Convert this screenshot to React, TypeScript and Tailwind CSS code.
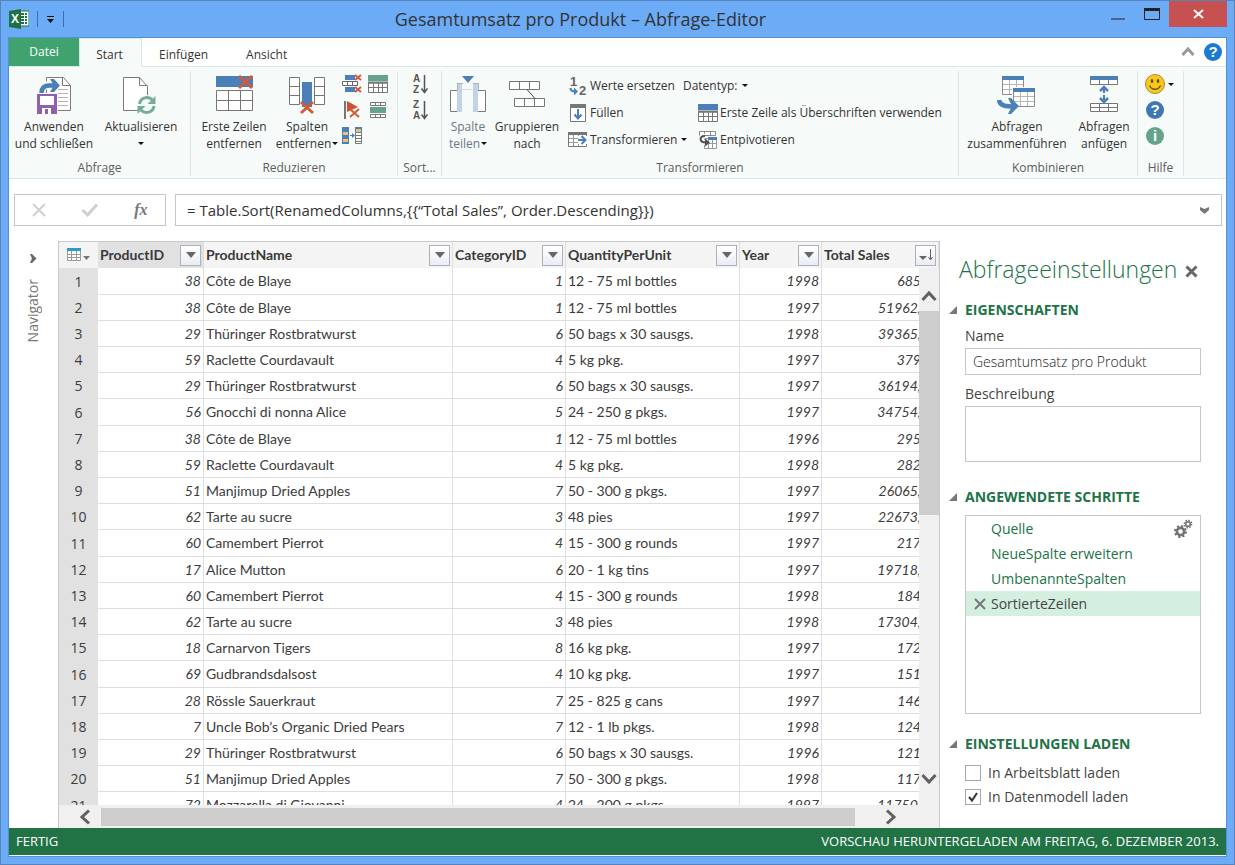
import { useState, type ReactNode } from 'react';
import clsx from 'clsx';

interface Row {
  id: number;
  name: string;
  category: number;
  quantity: string;
  year: number;
  total: string;
}

const ROWS: Row[] = [
  { id: 38, name: 'Côte de Blaye', category: 1, quantity: '12 - 75 ml bottles', year: 1998, total: '685' },
  { id: 38, name: 'Côte de Blaye', category: 1, quantity: '12 - 75 ml bottles', year: 1997, total: '51962,' },
  { id: 29, name: 'Thüringer Rostbratwurst', category: 6, quantity: '50 bags x 30 sausgs.', year: 1998, total: '39365,' },
  { id: 59, name: 'Raclette Courdavault', category: 4, quantity: '5 kg pkg.', year: 1997, total: '379' },
  { id: 29, name: 'Thüringer Rostbratwurst', category: 6, quantity: '50 bags x 30 sausgs.', year: 1997, total: '36194,' },
  { id: 56, name: 'Gnocchi di nonna Alice', category: 5, quantity: '24 - 250 g pkgs.', year: 1997, total: '34754,' },
  { id: 38, name: 'Côte de Blaye', category: 1, quantity: '12 - 75 ml bottles', year: 1996, total: '295' },
  { id: 59, name: 'Raclette Courdavault', category: 4, quantity: '5 kg pkg.', year: 1998, total: '282' },
  { id: 51, name: 'Manjimup Dried Apples', category: 7, quantity: '50 - 300 g pkgs.', year: 1997, total: '26065,' },
  { id: 62, name: 'Tarte au sucre', category: 3, quantity: '48 pies', year: 1997, total: '22673,' },
  { id: 60, name: 'Camembert Pierrot', category: 4, quantity: '15 - 300 g rounds', year: 1997, total: '217' },
  { id: 17, name: 'Alice Mutton', category: 6, quantity: '20 - 1 kg tins', year: 1997, total: '19718,' },
  { id: 60, name: 'Camembert Pierrot', category: 4, quantity: '15 - 300 g rounds', year: 1998, total: '184' },
  { id: 62, name: 'Tarte au sucre', category: 3, quantity: '48 pies', year: 1998, total: '17304,' },
  { id: 18, name: 'Carnarvon Tigers', category: 8, quantity: '16 kg pkg.', year: 1997, total: '172' },
  { id: 69, name: 'Gudbrandsdalsost', category: 4, quantity: '10 kg pkg.', year: 1997, total: '151' },
  { id: 28, name: 'Rössle Sauerkraut', category: 7, quantity: '25 - 825 g cans', year: 1997, total: '146' },
  { id: 7, name: 'Uncle Bob’s Organic Dried Pears', category: 7, quantity: '12 - 1 lb pkgs.', year: 1998, total: '124' },
  { id: 29, name: 'Thüringer Rostbratwurst', category: 6, quantity: '50 bags x 30 sausgs.', year: 1996, total: '121' },
  { id: 51, name: 'Manjimup Dried Apples', category: 7, quantity: '50 - 300 g pkgs.', year: 1998, total: '117' },
  { id: 72, name: 'Mozzarella di Giovanni', category: 4, quantity: '24 - 200 g pkgs.', year: 1997, total: '11750,' },
];

const COLUMNS = [
  { label: 'ProductID', width: 'w-[106px]' },
  { label: 'ProductName', width: '' },
  { label: 'CategoryID', width: 'w-[113px]' },
  { label: 'QuantityPerUnit', width: 'w-[174px]' },
  { label: 'Year', width: 'w-[82px]' },
  { label: 'Total Sales', width: 'w-[117px]' },
];

const STEPS = ['Quelle', 'NeueSpalte erweitern', 'UmbenannteSpalten', 'SortierteZeilen'];

function Caret() {
  return (
    <svg width="6" height="3" viewBox="0 0 6 3" className="shrink-0">
      <path d="M0 0h6L3 3z" fill="#111" />
    </svg>
  );
}

/* ---- large ribbon icons ---- */

function ApplyIcon() {
  return (
    <svg width="40" height="40" viewBox="0 0 40 40" fill="none">
      <path d="M12.5 2.5h17l7 8v25h-24z" fill="#fff" stroke="#7a7a7a" />
      <path d="M28.5 2.5v8h8" stroke="#7a7a7a" />
      <path d="M24 14.5h10M24 18.5h10M24 22.5h10M24 26.5h10M24 30.5h10" stroke="#b5b5b5" />
      <path d="M7 18c0-5 3-8 8-8h4" stroke="#f6faf9" strokeWidth="8" />
      <path d="M7.5 18c0-5 3-7.5 8-7.5h5" stroke="#4a7fb8" strokeWidth="4.5" />
      <path d="M16 4h4l6 6.5-6 6.5h-4l4-6.5z" fill="#4a7fb8" />
      <path d="M2 18h22v22H2z" fill="#f6faf9" />
      <path d="M3 19h20v20H3z" fill="#8e60b0" />
      <path d="M6 21h14v9H6z" fill="#fff" />
      <path d="M8 33h9v6H8z" fill="#fff" />
      <path d="M11 34h3v5h-3z" fill="#8e60b0" />
    </svg>
  );
}

function RefreshIcon() {
  return (
    <svg width="40" height="40" viewBox="0 0 40 40" fill="none">
      <path d="M2.5 2.5h16l8 9v24h-24z" fill="#fff" stroke="#7a7a7a" />
      <path d="M18.5 2.5v8h8" stroke="#7a7a7a" />
      <circle cx="25.5" cy="30" r="10" fill="#f6faf9" />
      <path d="M18.5 29a7.500 7.500 0 0 1 13-4M33 31a7.500 7.500 0 0 1-13 4" stroke="#76ac97" strokeWidth="3" />
      <path d="M34.5 21v8h-8zM16.5 39v-8h8z" fill="#76ac97" />
    </svg>
  );
}

function Cross({ x, y, s }: { x: number; y: number; s: number }) {
  return (
    <path
      d={`M${x} ${y}l${s} ${s - 1}M${x + s} ${y}l${-s} ${s - 1}`}
      stroke="#cf5b3b"
      strokeWidth={s > 9 ? 3 : 2}
      fill="none"
    />
  );
}

function RemoveRowsIcon() {
  return (
    <svg width="40" height="40" viewBox="0 0 40 40" fill="none">
      <path d="M2 1h37v11H2z" fill="#4a7fb8" />
      <path d="M2.5 15.5h36v20h-36z" fill="#fff" />
      <path d="M2.5 15.5h36v20h-36zM2.5 25.5h36M14.5 15.5v20M26.5 15.5v20" stroke="#767676" />
      <Cross x={25} y={1} s={13} />
    </svg>
  );
}

function RemoveColumnsIcon() {
  return (
    <svg width="40" height="40" viewBox="0 0 40 40" fill="none">
      <path d="M2.5 2.5h10v27h-10zM27.5 2.5h10v27h-10z" fill="#fff" />
      <path d="M2.5 2.5h10v27h-10zM2.5 11.5h10M2.5 20.5h10M27.5 2.5h10v27h-10zM27.5 11.5h10M27.5 20.5h10" stroke="#767676" />
      <path d="M15 7h10v25H15z" fill="#4a7fb8" />
      <Cross x={14} y={27} s={12} />
    </svg>
  );
}

function SplitIcon() {
  return (
    <svg width="40" height="40" viewBox="0 0 40 40" fill="none">
      <path d="M14 1h12l-6 7z" fill="#4a7fb8" />
      <path d="M2.5 15.5h10v21h-10zM28.5 15.5h9v21h-9z" fill="#fff" stroke="#7a7a7a" />
      <path d="M9 9h5v28H9zM25 9h5v28h-5z" fill="#c0d3ea" />
      <path d="M9.5 8.5v7M30.5 8.5v6M9 8.5h6M25 8.5h6" stroke="#b3b3b3" />
      <path d="M14.5 14.5h10" stroke="#dedede" />
    </svg>
  );
}

function GroupIcon() {
  return (
    <svg width="40" height="40" viewBox="0 0 40 40" fill="none">
      <path d="M2.5 6.5h30v8h-30zM7.5 23.5h30v8h-30z" fill="#fff" />
      <path d="M2.5 6.5h30v8h-30zM12.5 6.5v8M22.5 6.5v8M7.5 23.5h30v8h-30zM17.5 23.5v8M27.5 23.5v8" stroke="#767676" />
      <path d="M20 14.5l8 9" stroke="#444" />
    </svg>
  );
}

function MergeIcon() {
  return (
    <svg width="40" height="40" viewBox="0 0 40 40" fill="none">
      <path d="M5.5 4.5h21v15h-21z" fill="#fff" stroke="#8a8a8a" />
      <path d="M6 9.5h20M6 14.5h20M12.5 5v14M19.5 5v14" stroke="#b5b5b5" />
      <path d="M5 1h22v4H5z" fill="#4a7fb8" />
      <path d="M15 12h24v21H15z" fill="#f6faf9" />
      <path d="M16.5 16.5h21v15h-21z" fill="#fff" stroke="#8a8a8a" />
      <path d="M17 21.5h20M17 26.5h20M23.5 17v14M30.5 17v14" stroke="#b5b5b5" />
      <path d="M16 13h22v4H16z" fill="#4a7fb8" />
      <path d="M2 25c1 6 7 6.5 16 6.5" stroke="#4a7fb8" strokeWidth="4.5" />
      <path d="M11 23h3l8 8-8 8h-3l4-8z" fill="#4a7fb8" />
    </svg>
  );
}

function AppendIcon() {
  return (
    <svg width="40" height="40" viewBox="0 0 40 40" fill="none">
      <path d="M6.5 4.5h27v5h-27zM6.5 28.5h27v8h-27z" fill="#fff" />
      <path d="M6.5 4.5h27v5h-27zM15.5 5v4M24.5 5v4M6.5 28.5h27v8h-27zM6.5 32.5h27M15.5 28.5v8M24.5 28.5v8" stroke="#767676" />
      <path d="M6 1h28v4H6z" fill="#4a7fb8" />
      <path d="M20 12v6M20 20v6" stroke="#4a7fb8" strokeWidth="2" />
      <path d="M16 16l4-4 4 4M16 23l4 4 4-4" stroke="#4a7fb8" strokeWidth="2.5" />
    </svg>
  );
}

/* ---- small ribbon icons ---- */

function DuplicatesIcon() {
  return (
    <svg width="20" height="20" viewBox="0 0 20 20" fill="none">
      <path d="M3 1h10v5H3zM3 13h10v5H3z" fill="#4a7fb8" />
      <path d="M.5 7.5h15v4H.5zM5.5 7.5v4M10.5 7.5v4" fill="#fff" stroke="#666" />
      <Cross x={13} y={1} s={6} />
      <Cross x={13} y={13} s={6} />
    </svg>
  );
}

function KeepTopIcon({ fill }: { fill: string }) {
  return (
    <svg width="20" height="20" viewBox="0 0 20 20" fill="none">
      <path d="M0 1h20v6H0z" fill={fill} />
      <path d="M.5 9h19v9.5H.5z" fill="#fff" stroke="#777" />
      <path d="M0 8.5h20" stroke="#777" strokeWidth="2" />
      <path d="M5.5 9v9M10.5 9v9M14.5 9v9M0 13.5h20" stroke="#777" />
    </svg>
  );
}

function ErrorsIcon() {
  return (
    <svg width="20" height="20" viewBox="0 0 20 20" fill="none">
      <path d="M3 1v18" stroke="#767676" strokeWidth="2" />
      <path d="M5 1l11 6-11 5z" fill="#d2502e" />
      <Cross x={8} y={9} s={9} />
    </svg>
  );
}

function KeepRangeIcon() {
  return (
    <svg width="20" height="20" viewBox="0 0 20 20" fill="none">
      <path d="M2.5 2.5h15v3h-15zM7.5 2.5v3M12.5 2.5v3M2.5 14.5h15v3h-15zM7.5 14.5v3M12.5 14.5v3" fill="#fff" stroke="#767676" />
      <path d="M2 7h16v6H2z" fill="#65a38c" />
    </svg>
  );
}

function ChooseColumnsIcon() {
  return (
    <svg width="20" height="20" viewBox="0 0 20 20" fill="none">
      <path d="M0 1h7v17H0z" fill="#4a7fb8" />
      <path d="M1 6h5v3H1zM1 13h5v3H1z" fill="#ecc078" />
      <path d="M8 9.5h4" stroke="#4a7fb8" />
      <path d="M10 7l3 2.5-3 2.5z" fill="#4a7fb8" />
      <path d="M13.5 6.5h6v11h-6zM13.5 9.5h6M13.5 12.5h6M13.5 15.5h6" fill="#fff" stroke="#777" />
      <path d="M13 1h7v5h-7z" fill="#4a7fb8" />
      <path d="M14 3h5v3h-5z" fill="#ecc078" />
    </svg>
  );
}

function SortIcon({ top, bottom }: { top: string; bottom: string }) {
  return (
    <svg width="16" height="26" viewBox="0 0 16 26" fill="none">
      <g fill="#555" fontFamily="Liberation Sans, sans-serif" fontSize="10" fontWeight="700">
        <text x="1" y="11">{top}</text>
        <text x="1" y="22">{bottom}</text>
      </g>
      <path d="M12.5 4v17M9.5 17.5l3 4 3-4" stroke="#555" strokeWidth="1.5" />
    </svg>
  );
}

function ReplaceIcon() {
  return (
    <svg width="18" height="24" viewBox="0 0 18 24" fill="none">
      <g fill="#666" fontFamily="Liberation Sans, sans-serif" fontSize="13" fontWeight="700">
        <text x="1" y="12">1</text>
        <text x="10" y="21">2</text>
      </g>
      <path d="M1.5 14c0 3 2 3.5 5 3.5" stroke="#4a7fb8" strokeWidth="2" />
      <path d="M5 13.5l4 4-4 4z" fill="#4a7fb8" />
    </svg>
  );
}

function FillIcon() {
  return (
    <svg width="18" height="20" viewBox="0 0 18 20" fill="none">
      <path d="M1.5 1.5h15v17h-15z" fill="#fff" stroke="#767676" />
      <path d="M1 1h16v4H1z" fill="#767676" />
      <path d="M9 6v9M5.5 11.5l3.5 4 3.5-4" stroke="#4a7fb8" strokeWidth="2" />
    </svg>
  );
}

function TransformIcon() {
  return (
    <svg width="20" height="20" viewBox="0 0 20 20" fill="none">
      <path d="M.5 3.5h18v13H.5z" fill="#fff" stroke="#767676" />
      <path d="M5.5 4v12M10.5 4v12M1 8.5h17M1 12.5h17" stroke="#999" />
      <path d="M0 2h19v3H0z" fill="#767676" />
      <path d="M10 6h9v8h-9z" fill="#fff" />
      <path d="M10 10h7M13.5 6l4 4-4 4" stroke="#4a7fb8" strokeWidth="2" />
    </svg>
  );
}

function UnpivotIcon() {
  return (
    <svg width="20" height="20" viewBox="0 0 20 20" fill="none">
      <path d="M1.5 1.5h16v4h-16zM6.5 1v4M12.5 1v4" fill="#fff" stroke="#8a8a8a" />
      <path d="M6.5 8.5h12v10h-12zM10.5 9v9M14.5 9v9M6 13.5h12" fill="#fff" stroke="#999" />
      <path d="M10 7h9v3h-9z" fill="#4a7fb8" />
      <path d="M7 6C1 6 1 12.5 7 12.5" stroke="#f6faf9" strokeWidth="5" />
      <path d="M7 6C1 5.5 1 12.5 8 12.5" stroke="#505050" strokeWidth="2" />
      <path d="M7 8.5l5 4-5 4z" fill="#505050" />
    </svg>
  );
}

function SmileyIcon() {
  return (
    <svg width="20" height="20" viewBox="0 0 20 20" fill="none">
      <circle cx="10" cy="10" r="9.5" fill="#fbc913" stroke="#a78a3a" />
      <ellipse cx="7" cy="7" rx="1.3" ry="2" fill="#5c4a18" />
      <ellipse cx="13" cy="7" rx="1.3" ry="2" fill="#5c4a18" />
      <path d="M4.5 11.5c2 5 9 5 11 0" stroke="#5c4a18" strokeWidth="1.3" />
    </svg>
  );
}

function BadgeIcon({ glyph, fill }: { glyph: string; fill: string }) {
  return (
    <svg width="20" height="20" viewBox="0 0 20 20">
      <circle cx="10" cy="10" r="9" fill={fill} />
      <text x="10" y="15" textAnchor="middle" fill="#fff" fontFamily="Liberation Sans, sans-serif" fontSize="15" fontWeight="700">
        {glyph}
      </text>
    </svg>
  );
}

/* ---- misc icons ---- */

function ExcelLogo() {
  return (
    <svg width="20" height="20" viewBox="0 0 20 20">
      <path d="M11 2h9v15h-9z" fill="#fff" stroke="#1e7145" />
      <path d="M12 4h3v2h-3zM16 4h2v2h-2zM12 7h3v2h-3zM16 7h2v2h-2zM12 10h3v2h-3zM16 10h2v2h-2zM12 13h3v2h-3zM16 13h2v2h-2z" fill="#1e7145" />
      <path d="M0 2l12-2v20L0 18z" fill="#1e7145" />
      <text x="2" y="14" fill="#fff" fontFamily="Liberation Sans, sans-serif" fontSize="12" fontWeight="700">X</text>
    </svg>
  );
}

function TableIcon() {
  return (
    <svg width="23" height="14" viewBox="0 0 23 14" fill="none">
      <path d="M.5 3.5h13v9H.5z" fill="#fff" />
      <path d="M.5 1v11.5h13V1M4.5 3v9M9.5 3v9M1 6.5h13M1 9.5h13" stroke="#9a9a9a" />
      <path d="M0 0h14v3H0z" fill="#2b9cc9" />
      <path d="M16 8h7l-3.5 4z" fill="#777" />
    </svg>
  );
}

function GearsIcon() {
  return (
    <svg width="20" height="20" viewBox="0 0 20 20" fill="none" stroke="#737373">
      <circle cx="7.5" cy="12.5" r="3.6" strokeWidth="2.6" />
      <circle cx="7.5" cy="12.5" r="5.5" strokeWidth="2" strokeDasharray="2.16 2.16" />
      <circle cx="15" cy="5" r="2.3" strokeWidth="1.6" />
      <circle cx="15" cy="5" r="3.6" strokeWidth="1.6" strokeDasharray="1.41 1.41" />
    </svg>
  );
}

function Chevron({ d }: { d: string }) {
  return (
    <svg width="16" height="16" viewBox="0 0 16 16" fill="none">
      <path d={d} stroke="#606060" strokeWidth="3" />
    </svg>
  );
}

/* ---- ribbon building blocks ---- */

function RibbonGroup({ label, className, children }: { label: string; className?: string; children: ReactNode }) {
  return (
    <section className={clsx('flex shrink-0 flex-col border-r border-[#dfe5e3]', className)}>
      <div className="flex h-[89px] items-start">{children}</div>
      <h2 className="text-center text-xs leading-4 text-[#5c5c5c]">{label}</h2>
    </section>
  );
}

interface BigButtonProps {
  icon: ReactNode;
  lines: [string, string];
  caret?: boolean;
  muted?: boolean;
  className?: string;
}

function BigButton({ icon, lines, caret, muted, className }: BigButtonProps) {
  return (
    <button
      type="button"
      className={clsx(
        'flex shrink-0 flex-col items-center whitespace-nowrap pt-1 text-xs leading-[17px]',
        muted ? 'text-[#6c7786]' : 'text-[#333]',
        className
      )}
    >
      {icon}
      <span className="mt-[3px]">{lines[0]}</span>
      <span className="flex h-[17px] items-center gap-px">
        {lines[1]}
        {caret && <Caret />}
      </span>
    </button>
  );
}

function SmallButton({ icon, label, caret, className }: { icon?: ReactNode; label: string; caret?: boolean; className?: string }) {
  return (
    <button type="button" className={clsx('flex items-center whitespace-nowrap text-xs text-[#333]', className)}>
      {icon && <span className="mr-[2px] flex w-5 justify-center">{icon}</span>}
      {label}
      {caret && <span className="ml-1 flex"><Caret /></span>}
    </button>
  );
}

function IconButton({ label, children }: { label: string; children: ReactNode }) {
  return (
    <button type="button" aria-label={label} className="flex h-[26px] items-center">
      {children}
    </button>
  );
}

function SectionTitle({ children }: { children: ReactNode }) {
  return (
    <h3 className="flex items-center gap-2 text-sm font-bold leading-5 text-[#217346]">
      <svg width="8" height="8" viewBox="0 0 8 8"><path d="M8 0v8H0z" fill="#777" /></svg>
      {children}
    </h3>
  );
}

function LoadOption({ label, checked, onChange }: { label: string; checked: boolean; onChange: (v: boolean) => void }) {
  return (
    <label className="flex h-6 items-center gap-[7px] text-sm text-[#444]">
      <span className="relative flex">
        <input
          type="checkbox"
          checked={checked}
          onChange={(e) => onChange(e.target.checked)}
          className="size-4 appearance-none border border-[#a6a6a6] bg-white"
        />
        {checked && (
          <svg width="16" height="16" viewBox="0 0 16 16" className="pointer-events-none absolute inset-0" fill="none">
            <path d="M4 8l3 3.5 5-7.5" stroke="#333" strokeWidth="2" />
          </svg>
        )}
      </span>
      {label}
    </label>
  );
}

function Ribbon() {
  return (
    <div className="flex h-[113px] shrink-0 overflow-hidden border-y border-[#d6e8e1] bg-[#f6faf9] pb-[2px] pt-1">
      <RibbonGroup label="Abfrage" className="w-[182px]">
        <BigButton icon={<ApplyIcon />} lines={['Anwenden', 'und schließen']} className="w-[90px]" />
        <BigButton icon={<RefreshIcon />} lines={['Aktualisieren', '']} caret className="w-[84px]" />
      </RibbonGroup>

      <RibbonGroup label="Reduzieren" className="w-[207px]">
        <BigButton icon={<RemoveRowsIcon />} lines={['Erste Zeilen', 'entfernen']} className="w-[86px]" />
        <BigButton icon={<RemoveColumnsIcon />} lines={['Spalten', 'entfernen']} caret className="w-[60px]" />
        <div className="ml-[5px] grid grid-cols-2 gap-x-[6px]">
          <IconButton label="Duplikate entfernen"><DuplicatesIcon /></IconButton>
          <IconButton label="Erste Zeilen beibehalten"><KeepTopIcon fill="#65a38c" /></IconButton>
          <IconButton label="Fehler entfernen"><ErrorsIcon /></IconButton>
          <IconButton label="Zeilenbereich beibehalten"><KeepRangeIcon /></IconButton>
          <IconButton label="Spalten auswählen"><ChooseColumnsIcon /></IconButton>
        </div>
      </RibbonGroup>

      <RibbonGroup label="Sort..." className="w-11">
        <div className="mx-auto flex flex-col">
          <IconButton label="Aufsteigend sortieren"><SortIcon top="A" bottom="Z" /></IconButton>
          <IconButton label="Absteigend sortieren"><SortIcon top="Z" bottom="A" /></IconButton>
        </div>
      </RibbonGroup>

      <RibbonGroup label="Transformieren" className="w-[517px]">
        <BigButton icon={<SplitIcon />} lines={['Spalte', 'teilen']} caret muted className="w-[52px]" />
        <BigButton icon={<GroupIcon />} lines={['Gruppieren', 'nach']} className="w-[66px]" />
        <div className="ml-2 grid auto-rows-[27px] pt-px">
          <div className="flex gap-2">
            <SmallButton icon={<ReplaceIcon />} label="Werte ersetzen" />
            <SmallButton label="Datentyp:" caret />
          </div>
          <div className="flex">
            <SmallButton icon={<FillIcon />} label="Füllen" className="w-[130px]" />
            <SmallButton icon={<KeepTopIcon fill="#4a7fb8" />} label="Erste Zeile als Überschriften verwenden" />
          </div>
          <div className="flex">
            <SmallButton icon={<TransformIcon />} label="Transformieren" caret className="w-[130px]" />
            <SmallButton icon={<UnpivotIcon />} label="Entpivotieren" />
          </div>
        </div>
      </RibbonGroup>

      <RibbonGroup label="Kombinieren" className="w-[179px]">
        <BigButton icon={<MergeIcon />} lines={['Abfragen', 'zusammenführen']} className="w-[116px]" />
        <BigButton icon={<AppendIcon />} lines={['Abfragen', 'anfügen']} className="w-[58px]" />
      </RibbonGroup>

      <RibbonGroup label="Hilfe" className="w-[46px]">
        <div className="ml-[7px] flex flex-col">
          <button type="button" aria-label="Feedback" className="flex h-[26px] items-center gap-[3px]">
            <SmileyIcon />
            <Caret />
          </button>
          <IconButton label="Hilfe"><BadgeIcon glyph="?" fill="#3f76b5" /></IconButton>
          <IconButton label="Info"><BadgeIcon glyph="i" fill="#65a38c" /></IconButton>
        </div>
      </RibbonGroup>
    </div>
  );
}

function PreviewTable() {
  const cell = 'truncate border-b border-r border-[#dedede] px-[2px] py-0';
  const num = 'text-right italic';

  return (
    <div className="relative min-h-0 flex-1 overflow-hidden">
      <table className="w-full table-fixed border-separate border-spacing-0 text-sm leading-5 text-[#3c3c3c] font-['Lato',sans-serif]">
        <thead>
          <tr className="h-[26px]">
            <th className="w-[39px] bg-[#f4f4f4] p-0">
              <button type="button" aria-label="Tabellenmenü" className="ml-2 flex">
                <TableIcon />
              </button>
            </th>
            {COLUMNS.map((col, i) => (
              <th
                key={col.label}
                className={clsx(
                  'border-r border-[#dedede] p-0 text-left font-bold text-[#3a3a3a]',
                  i === 0 ? 'bg-[#e1e1e1]' : 'bg-[#f4f4f4]',
                  col.width
                )}
              >
                <div className="flex items-center justify-between pl-[2px] pr-[2px]">
                  {col.label}
                  <button
                    type="button"
                    aria-label={`${col.label} filtern`}
                    className="flex size-[21px] items-center justify-center border border-[#abb0ba] bg-linear-to-b from-white to-[#e9edf3]"
                  >
                    {i === 5 ? (
                      <svg width="16" height="16" viewBox="0 0 16 16" fill="none">
                        <path d="M1 9h8l-4 4z" fill="#666" />
                        <path d="M12.5 2v10M10.5 10l2 3 2-3" stroke="#666" />
                      </svg>
                    ) : (
                      <svg width="10" height="6" viewBox="0 0 10 6"><path d="M0 0h10L5 6z" fill="#666" /></svg>
                    )}
                  </button>
                </div>
              </th>
            ))}
          </tr>
        </thead>
        <tbody>
          {ROWS.map((row, i) => (
            <tr key={i} className="h-[26px] nth-[5n+1]:h-[27px]">
              <th scope="row" className="bg-[#e1e1e1] p-0 text-center font-normal font-['Open_Sans',sans-serif]">{i + 1}</th>
              <td className={clsx(cell, num)}>{row.id}</td>
              <td className={cell}>{row.name}</td>
              <td className={clsx(cell, num)}>{row.category}</td>
              <td className={cell}>{row.quantity}</td>
              <td className={clsx(cell, num)}>{row.year}</td>
              <td className="overflow-hidden border-b border-[#dedede] py-0 pl-0 pr-[18px] text-right italic">{row.total}</td>
            </tr>
          ))}
        </tbody>
      </table>

      {/* vertical scroll bar sits over the last column */}
      <div className="absolute bottom-0 right-0 top-[26px] flex w-5 flex-col items-center bg-[#f0f0f0] pb-[18px] pt-5">
        <button type="button" aria-label="Nach oben" className="flex"><Chevron d="M1.5 12L8 5l6.5 7" /></button>
        <div className="mt-[7px] h-[204px] w-full bg-[#cdcdcd]" />
        <div className="flex-1" />
        <button type="button" aria-label="Nach unten" className="flex"><Chevron d="M1.5 4L8 11l6.5-7" /></button>
      </div>
    </div>
  );
}

function SettingsPanel() {
  const [name, setName] = useState('Gesamtumsatz pro Produkt');
  const [selected, setSelected] = useState(3);
  const [sheet, setSheet] = useState(false);
  const [model, setModel] = useState(true);

  return (
    <aside className="flex w-[286px] shrink-0 flex-col pl-[9px] pr-[25px] text-sm text-[#444]">
      <div className="flex h-[59px] items-center justify-between pb-[3px] pl-[10px]">
        <h2 className="text-[23px] font-light text-[#217346]">Abfrageeinstellungen</h2>
        <button type="button" aria-label="Schließen" className="mr-[3px] mt-1">
          <svg width="13" height="13" viewBox="0 0 13 13"><path d="M1.5 1.5l10 10M11.5 1.5l-10 10" stroke="#666" strokeWidth="3" /></svg>
        </button>
      </div>

      <SectionTitle>EIGENSCHAFTEN</SectionTitle>
      <div className="flex flex-col pl-4">
        <label htmlFor="query-name" className="mt-[6px] leading-5">Name</label>
        <input
          id="query-name"
          value={name}
          onChange={(e) => setName(e.target.value)}
          className="mt-[2px] h-[27px] border border-[#c6c6c6] px-[7px] font-light text-[#222] outline-none"
        />
        <label htmlFor="query-desc" className="mt-[9px] leading-5">Beschreibung</label>
        <textarea id="query-desc" className="mt-[2px] h-14 resize-none border border-[#c6c6c6] px-[7px] outline-none" />
      </div>

      <div className="h-[25px]" />
      <SectionTitle>ANGEWENDETE SCHRITTE</SectionTitle>
      <ul className="ml-4 mt-2 h-[199px] border border-[#c6c6c6]">
        {STEPS.map((step, i) => (
          <li key={step}>
            <button
              type="button"
              onClick={() => setSelected(i)}
              className={clsx(
                'flex h-[25px] w-full items-center pl-2 pr-[7px]',
                i === selected ? 'bg-[#d4efe0] text-[#444]' : 'text-[#217346]'
              )}
            >
              <span className="w-[17px]">
                {i === selected && (
                  <svg width="12" height="12" viewBox="0 0 12 12" fill="none">
                    <path d="M1 1l10 10M11 1L1 11" stroke="#777" strokeWidth="2" />
                  </svg>
                )}
              </span>
              {step}
              {i === 0 && <span className="ml-auto"><GearsIcon /></span>}
            </button>
          </li>
        ))}
      </ul>

      <div className="h-5" />
      <SectionTitle>EINSTELLUNGEN LADEN</SectionTitle>
      <div className="mt-[7px] pl-4">
        <LoadOption label="In Arbeitsblatt laden" checked={sheet} onChange={setSheet} />
        <LoadOption label="In Datenmodell laden" checked={model} onChange={setModel} />
      </div>
    </aside>
  );
}

export default function App() {
  const [formula, setFormula] = useState('= Table.Sort(RenamedColumns,{{“Total Sales”, Order.Descending}})');

  return (
    <div className="flex h-screen flex-col overflow-hidden border border-[#5584bd] bg-[#6cabf5] px-[7px] pb-[7px] font-['Open_Sans',sans-serif] text-[#333]">
      {/* Title bar */}
      <header className="flex h-9 shrink-0 items-start">
        <div className="flex h-9 items-center gap-2 pl-px">
          <ExcelLogo />
          <span className="h-4 w-px bg-[#3d6ea5]" />
          <button type="button" aria-label="Schnellzugriff" className="mx-px flex">
            <svg width="7" height="7" viewBox="0 0 7 7"><path d="M0 0h7v1H0zM0 3h7L3.5 7z" fill="#111" /></svg>
          </button>
          <span className="h-4 w-px bg-[#3d6ea5]" />
        </div>
        <h1 className="flex-1 pr-1 text-center text-lg leading-9">Gesamtumsatz pro Produkt – Abfrage-Editor</h1>
        <button type="button" aria-label="Minimieren" className="flex h-[26px] w-[34px] items-center justify-center">
          <svg width="14" height="16" viewBox="0 0 14 16"><path d="M0 12h14v2H0z" fill="#46678f" /></svg>
        </button>
        <button type="button" aria-label="Maximieren" className="flex h-[26px] w-[34px] items-center justify-center">
          <svg width="16" height="12" viewBox="0 0 16 12" fill="none"><path d="M.5.5h15v11H.5z" stroke="#222" /><path d="M0 0h16v3H0z" fill="#222" /></svg>
        </button>
        <button type="button" aria-label="Fenster schließen" className="flex h-[26px] w-[58px] items-center justify-center bg-[#c75050]">
          <svg width="11" height="10" viewBox="0 0 11 10"><path d="M1 1l9 8M10 1L1 9" stroke="#fff" strokeWidth="2" /></svg>
        </button>
      </header>

      <main className="flex min-h-0 flex-1 flex-col border border-[#568fd3] bg-white">
        {/* Tabs */}
        <nav className="relative z-10 flex h-7 shrink-0 text-xs">
          <button type="button" className="w-[70px] bg-[#40a36f] text-white">Datei</button>
          <button type="button" className="-mb-px w-[63px] border-x border-t border-[#d6e8e1] bg-[#f6faf9] pr-[2px] pt-1">Start</button>
          <button type="button" className="ml-[17px] pt-[6px]">Einfügen</button>
          <button type="button" className="ml-[38px] pt-[6px]">Ansicht</button>
          <div className="ml-auto flex items-center gap-2 pr-[3px]">
            <button type="button" aria-label="Menüband minimieren">
              <svg width="14" height="12" viewBox="0 0 14 12" fill="none"><path d="M1.5 9L7 3l5.5 6" stroke="#999" strokeWidth="3" /></svg>
            </button>
            <button type="button" aria-label="Hilfe"><BadgeIcon glyph="?" fill="#1a79d2" /></button>
          </div>
        </nav>

        <Ribbon />

        {/* Formula bar */}
        <div className="mt-[15px] flex h-8 shrink-0 gap-[9px] pl-[5px] pr-1">
          <div className="flex w-[152px] shrink-0 items-center justify-around border border-[#c6c6c6]">
            <button type="button" aria-label="Verwerfen">
              <svg width="14" height="14" viewBox="0 0 14 14"><path d="M1 1l12 12M13 1L1 13" stroke="#cfcfcf" strokeWidth="2" /></svg>
            </button>
            <button type="button" aria-label="Übernehmen">
              <svg width="18" height="14" viewBox="0 0 18 14" fill="none"><path d="M1.5 7l5 5L16 1.5" stroke="#cfcfcf" strokeWidth="3" /></svg>
            </button>
            <button type="button" aria-label="Funktion einfügen" className="text-base font-bold italic text-[#777] font-['Liberation_Serif',serif]">
              fx
            </button>
          </div>
          <div className="flex min-w-0 flex-1 items-center border border-[#c6c6c6] pl-[11px] pr-3">
            <input
              aria-label="Formel"
              value={formula}
              onChange={(e) => setFormula(e.target.value)}
              className="min-w-0 flex-1 text-[15px] text-[#333] outline-none"
            />
            <button type="button" aria-label="Formelleiste erweitern">
              <svg width="9" height="7" viewBox="0 0 9 7"><path d="M0 0l4.500 2L9 0v3L4.500 7 0 3z" fill="#777" /></svg>
            </button>
          </div>
        </div>

        {/* Workspace */}
        <div className="mt-[15px] flex min-h-0 flex-1">
          <div className="flex w-[49px] shrink-0 flex-col items-center pr-px pt-[13px]">
            <button type="button" className="flex flex-col items-center gap-4 text-sm text-[#777]">
              <svg width="7" height="9" viewBox="0 0 7 9"><path d="M0 0h2l4.500 4.500L2 9H0l2-4.500z" fill="#666" /></svg>
              <span className="rotate-180 [writing-mode:vertical-rl]">Navigator</span>
            </button>
          </div>

          <section className="flex min-w-0 flex-1 flex-col border-x border-t border-[#c9c9c9]">
            <PreviewTable />
            <div className="flex h-[23px] shrink-0 items-center bg-[#f0f0f0] pl-[18px] pr-10">
              <button type="button" aria-label="Nach links" className="flex"><Chevron d="M12 1.500L5 8l7 6.500" /></button>
              <div className="ml-2 mr-7 h-[18px] flex-1 bg-[#cdcdcd]" />
              <button type="button" aria-label="Nach rechts" className="flex"><Chevron d="M4 1.500L11 8l-7 6.500" /></button>
            </div>
          </section>

          <SettingsPanel />
        </div>

        {/* Status bar */}
        <footer className="mb-px flex h-[27px] shrink-0 items-center justify-between bg-[#217346] px-[7px] text-[13px] text-white">
          <span>FERTIG</span>
          <span>VORSCHAU HERUNTERGELADEN AM FREITAG, 6. DEZEMBER 2013.</span>
        </footer>
      </main>
    </div>
  );
}
